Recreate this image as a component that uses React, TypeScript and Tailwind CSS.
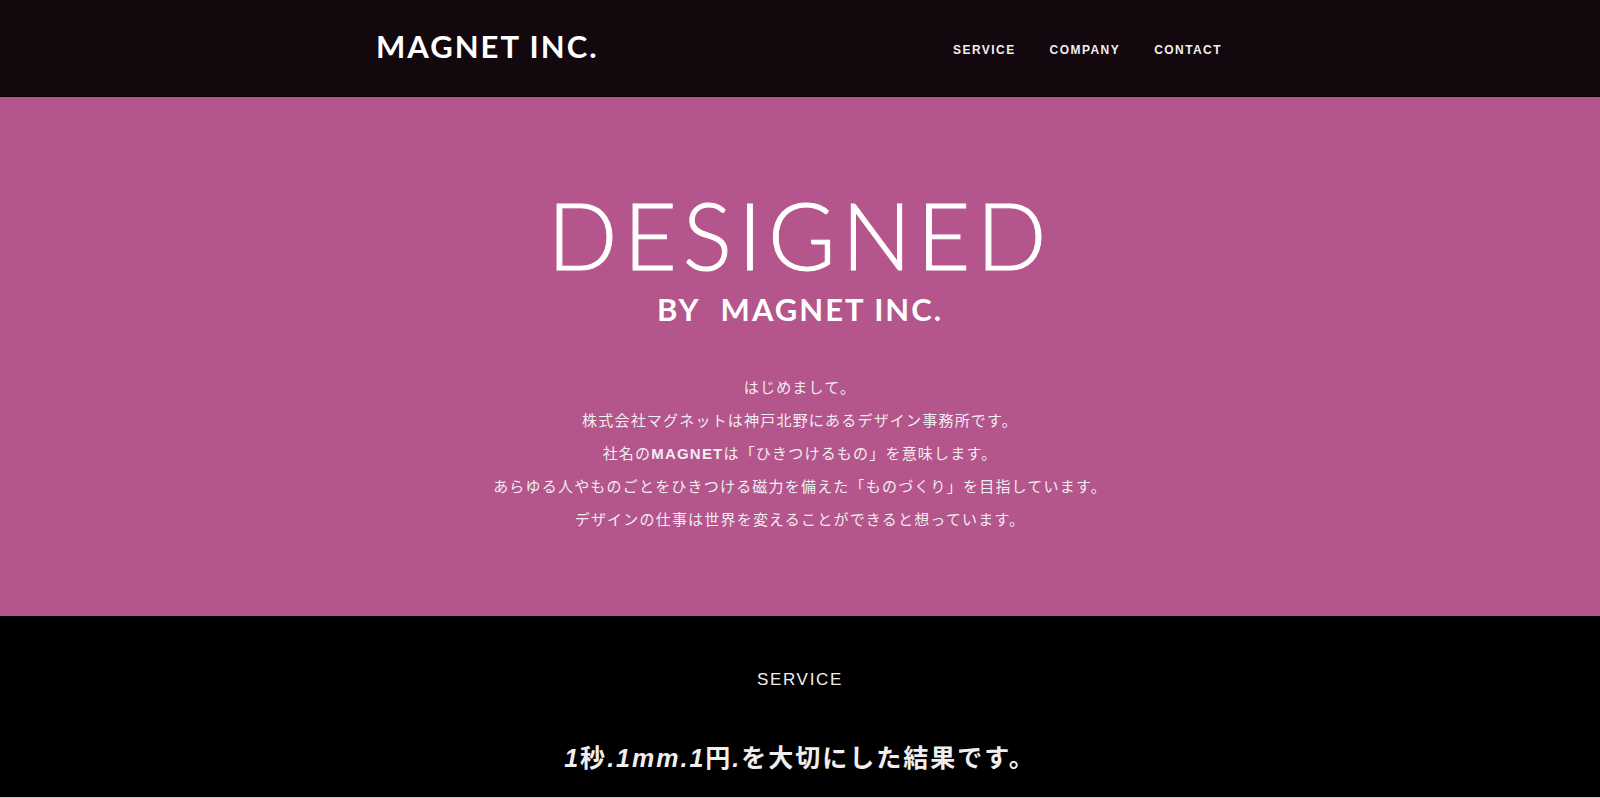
const NAV_ITEMS = [
  { label: "SERVICE", href: "#service" },
  { label: "COMPANY", href: "#company" },
  { label: "CONTACT", href: "#contact" },
];

const INTRO_LINES = [
  <>はじめまして。</>,
  <>株式会社マグネットは神戸北野にあるデザイン事務所です。</>,
  <>
    社名の<strong>MAGNET</strong>は「ひきつけるもの」を意味します。
  </>,
  <>あらゆる人やものごとをひきつける磁力を備えた「ものづくり」を目指しています。</>,
  <>デザインの仕事は世界を変えることができると想っています。</>,
];

function Header() {
  return (
    <header className="border-b border-black bg-[#12080e]">
      <div className="mx-auto flex h-24 max-w-[848px] items-center justify-between">
        <a
          href="#top"
          className="pb-1 font-['Lato',sans-serif] text-[31px] leading-8 font-bold tracking-[2px] text-white"
        >
          MAGNET INC.
        </a>
        <nav className="flex gap-[34px] pt-1 pr-0.5">
          {NAV_ITEMS.map((item) => (
            <a key={item.href} href={item.href} className="text-[12px] leading-5 font-bold tracking-[0.12em]">
              {item.label}
            </a>
          ))}
        </nav>
      </div>
    </header>
  );
}

function Hero() {
  return (
    <section id="top" className="bg-[#b4558c] px-4 pt-[90px] pb-20 text-center">
      <h1 className="font-['Lato',sans-serif] text-white">
        <span className="block text-[92px] leading-[96px] font-light tracking-[6px] [-webkit-text-stroke:1px_white]">
          DESIGNED
        </span>
        <span className="flex justify-center gap-5 pt-1.5 text-[31px] leading-10 font-bold tracking-[2px]">
          <span>BY</span>
          <span>MAGNET INC.</span>
        </span>
      </h1>
      <div className="pt-[42px] text-[15px] leading-[33px] tracking-[0.08em]">
        {INTRO_LINES.map((line, i) => (
          <p key={i}>{line}</p>
        ))}
      </div>
    </section>
  );
}

function Service() {
  return (
    <section id="service" className="px-4 pt-[52px] pb-4 text-center">
      <h2 className="text-[17px] leading-6 tracking-widest">SERVICE</h2>
      <p className="pt-[46px] text-[25px] leading-10 font-bold tracking-[2px]">
        <em>1</em>秒<em>.1mm.1</em>円<em>.</em>を大切にした結果です。
      </p>
    </section>
  );
}

export default function App() {
  return (
    <div className="min-h-screen border-b border-[#c8c8c8] bg-black font-['Liberation_Sans','Noto_Sans_CJK_JP',sans-serif] text-[#f0eef0]">
      <Header />
      <main>
        <Hero />
        <Service />
      </main>
    </div>
  );
}
